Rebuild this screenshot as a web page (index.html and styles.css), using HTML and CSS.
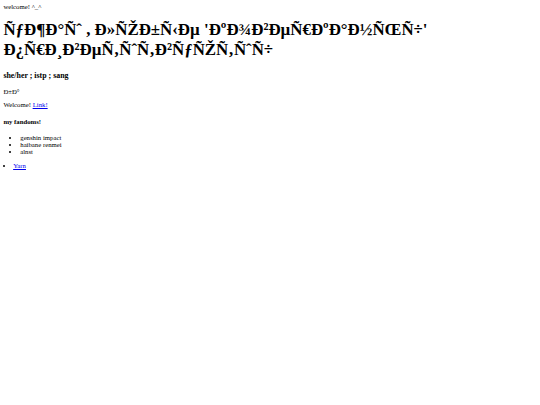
FILE: index.html
```html
<!DOCTYPE html>
<html>
<head>
<meta charset="utf-8">
<title>welcome</title>
<link rel="stylesheet" href="styles.css">
</head>
<body class="page">
<div class="greeting">welcome! ^_^</div>
<h1 class="title">ÑƒÐ¶Ð°Ñˆ , Ð»ÑŽÐ±Ñ‹Ðµ 'ÐºÐ¾Ð²ÐµÑ€ÐºÐ°Ð½ÑŒÑ÷' Ð¿Ñ€Ð¸Ð²ÐµÑ‚ÑˆÑ‚Ð²ÑƒÑŽÑ‚ÑˆÑ÷</h1>
<h3 class="subtitle">she/her ; istp ; sang</h3>
<p class="text">Ð±Ð°</p>
<p class="text">Welcome! <a class="link" href="#">Link!</a></p>
<h4 class="section">my fandoms!</h4>
<ul class="list">
<li>genshin impact</li>
<li>haibane renmei</li>
<li>alnst</li>
</ul>
<ul class="list list-flat">
<li><a class="link" href="#">Yarn</a></li>
</ul>
</body>
</html>
```
FILE: styles.css
```css
.page {
  margin: 3.375px;
  font-family: "Liberation Serif", "Times New Roman", serif;
  font-size: 6.75px;
  color: #000;
  background: #fff;
}
.greeting {
  margin: 0;
}
.title {
  font-size: 16.875px;
  line-height: 19.5px;
  font-weight: bold;
  margin: 10px 0 11.4px;
}
.subtitle {
  font-size: 7.9px;
  font-weight: bold;
  margin: 7.9px 0;
}
.text {
  margin: 6.75px 0;
}
.section {
  font-size: 6.75px;
  font-weight: bold;
  margin: 9.5px 0;
}
.list {
  margin: 6.75px 0;
  padding-left: 16.875px;
}
.list-flat {
  padding-left: 0;
  list-style-position: inside;
}
.link {
  color: #0000ee;
  text-decoration: underline;
}
```
